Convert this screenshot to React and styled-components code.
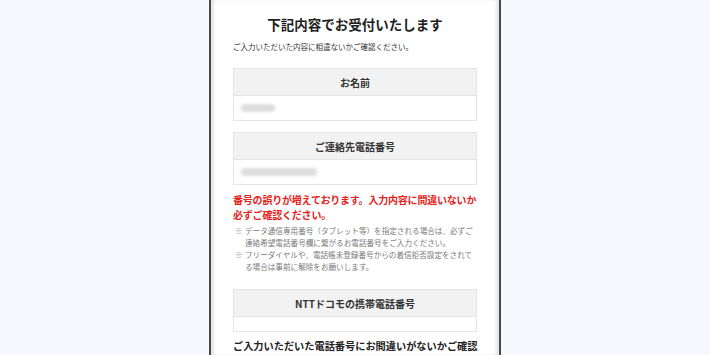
import React from "react";
import styled, { createGlobalStyle } from "styled-components";

const GlobalStyle = createGlobalStyle`
  html, body {
    margin: 0;
    padding: 0;
    background: #f5f8fc;
    overflow: hidden;
  }
  body {
    font-family: "Noto Sans CJK JP", "Noto Sans", sans-serif;
    color: #222;
  }
`;

const Page = styled.div`
  width: 710px;
  height: 355px;
  display: flex;
  justify-content: center;
  overflow: hidden;
`;

const Phone = styled.div`
  width: 292px;
  height: 355px;
  background: #fff;
  border-left: 2px solid #4a4a4a;
  border-right: 2px solid #4a4a4a;
  box-shadow: inset 4px 0 3px -1px #e6e6e6, inset -4px 0 3px -1px #e6e6e6;
  padding: 13px 22px 0;
  box-sizing: border-box;
  overflow: hidden;
`;

const Title = styled.h1`
  margin: 0;
  font-size: 13.5px;
  line-height: 22px;
  font-weight: 700;
  text-align: center;
  color: #1e1e1e;
`;

const Lead = styled.p`
  margin: 6px 0 0;
  font-size: 7.5px;
  line-height: 12px;
  color: #333;
`;

const Field = styled.div`
  margin-top: ${(p) => p.$gap}px;
  border: 1px solid #e4e4e4;
`;

const FieldHead = styled.div`
  height: 26px;
  background: #f2f2f2;
  border-bottom: 1px solid #e4e4e4;
  display: flex;
  align-items: center;
  justify-content: center;
  font-size: 10px;
  font-weight: 700;
  color: #333;
`;

const FieldBody = styled.div`
  height: ${(p) => p.$h}px;
  display: flex;
  align-items: center;
  padding-left: 7px;
`;

const Blur = styled.div`
  width: ${(p) => p.$w}px;
  height: 8px;
  border-radius: 4px;
  background: #dcdcdc;
  filter: blur(1.5px);
`;

const Alert = styled.p`
  margin: 7px 0 0;
  font-size: 10px;
  line-height: 15px;
  font-weight: 700;
  letter-spacing: -0.2px;
  color: #e3231b;
  white-space: nowrap;
`;

const Notes = styled.ul`
  list-style: none;
  margin: 3px 0 0;
  padding: 0;
`;

const Note = styled.li`
  position: relative;
  padding-left: 12px;
  font-size: 7.6px;
  line-height: 12px;
  color: #7a7a7a;
  &::before {
    content: "※";
    position: absolute;
    left: 2px;
    top: 0;
    color: #9a9a9a;
  }
`;

const Confirm = styled.p`
  margin: 6px 0 0;
  font-size: 10.2px;
  line-height: 16px;
  font-weight: 700;
  color: #222;
  white-space: nowrap;
`;

export default function App() {
  return (
    <>
      <GlobalStyle />
      <Page>
        <Phone>
          <Title>下記内容でお受付いたします</Title>
          <Lead>ご入力いただいた内容に相違ないかご確認ください。</Lead>

          <Field $gap={15}>
            <FieldHead>お名前</FieldHead>
            <FieldBody $h={24}>
              <Blur $w={34} />
            </FieldBody>
          </Field>

          <Field $gap={11}>
            <FieldHead>ご連絡先電話番号</FieldHead>
            <FieldBody $h={24}>
              <Blur $w={76} />
            </FieldBody>
          </Field>

          <Alert>
            番号の誤りが増えております。入力内容に間違いないか
            <br />
            必ずご確認ください。
          </Alert>

          <Notes>
            <Note>
              データ通信専用番号（タブレット等）を指定される場合は、必ずご連絡希望電話番号欄に繋がるお電話番号をご入力ください。
            </Note>
            <Note>
              フリーダイヤルや、電話帳未登録番号からの着信拒否設定をされてる場合は事前に解除をお願いします。
            </Note>
          </Notes>

          <Field $gap={16}>
            <FieldHead>NTTドコモの携帯電話番号</FieldHead>
            <FieldBody $h={14} />
          </Field>

          <Confirm>ご入力いただいた電話番号にお間違いがないかご確認</Confirm>
        </Phone>
      </Page>
    </>
  );
}
